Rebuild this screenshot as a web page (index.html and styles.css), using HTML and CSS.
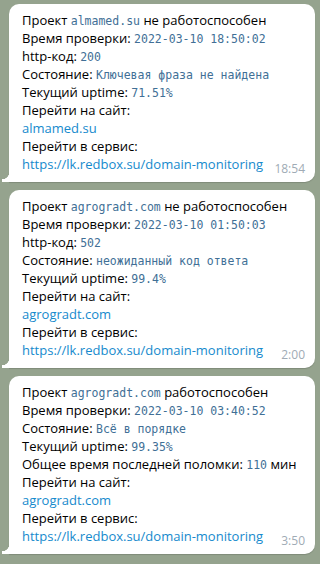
FILE: index.html
```html
<!DOCTYPE html>
<html lang="ru">
<head>
    <meta charset="UTF-8">
    <meta name="viewport" content="width=device-width, initial-scale=1.0">
    <title>Domain monitoring</title>
    <link rel="stylesheet" href="styles.css">
</head>
<body>
    <div class="chat">
        <div class="message">
            <div class="line">Проект <code>almamed.su</code> не работоспособен</div>
            <div class="line">Время проверки: <code>2022-03-10 18:50:02</code></div>
            <div class="line">http-код: <code>200</code></div>
            <div class="line">Состояние: <code>Ключевая фраза не найдена</code></div>
            <div class="line">Текущий uptime: <code>71.51%</code></div>
            <div class="line">Перейти на сайт:</div>
            <div class="line"><a href="#">almamed.su</a></div>
            <div class="line">Перейти в сервис:</div>
            <div class="line last">
                <a href="#">https://lk.redbox.su/domain-monitoring</a>
                <span class="time">18:54</span>
            </div>
        </div>

        <div class="message">
            <div class="line">Проект <code>agrogradt.com</code> не работоспособен</div>
            <div class="line">Время проверки: <code>2022-03-10 01:50:03</code></div>
            <div class="line">http-код: <code>502</code></div>
            <div class="line">Состояние: <code>неожиданный код ответа</code></div>
            <div class="line">Текущий uptime: <code>99.4%</code></div>
            <div class="line">Перейти на сайт:</div>
            <div class="line"><a href="#">agrogradt.com</a></div>
            <div class="line">Перейти в сервис:</div>
            <div class="line last">
                <a href="#">https://lk.redbox.su/domain-monitoring</a>
                <span class="time">2:00</span>
            </div>
        </div>

        <div class="message">
            <div class="line">Проект <code>agrogradt.com</code> работоспособен</div>
            <div class="line">Время проверки: <code>2022-03-10 03:40:52</code></div>
            <div class="line">Состояние: <code>Всё в порядке</code></div>
            <div class="line">Текущий uptime: <code>99.35%</code></div>
            <div class="line">Общее время последней поломки: <code>110</code> мин</div>
            <div class="line">Перейти на сайт:</div>
            <div class="line"><a href="#">agrogradt.com</a></div>
            <div class="line">Перейти в сервис:</div>
            <div class="line last">
                <a href="#">https://lk.redbox.su/domain-monitoring</a>
                <span class="time">3:50</span>
            </div>
        </div>
    </div>
</body>
</html>
```

FILE: styles.css
```css
body {
    margin: 0;
    height: 564px;
    overflow: hidden;
    background-color: #95a38e;
    font-family: 'Open Sans', 'Noto Sans', sans-serif;
    font-size: 13px;
    color: #000;
}

.chat {
    display: flex;
    flex-direction: column;
    gap: 8px;
    padding: 4px 5px 0 9px;
}

.message {
    position: relative;
    background: #fff;
    border-radius: 10px 10px 10px 0;
    padding: 7px 10px 9px 13px;
    box-shadow: 0 1px 1px rgba(0, 0, 0, 0.15);
}

.message::before {
    content: '';
    position: absolute;
    left: -7px;
    bottom: 0;
    width: 7px;
    height: 10px;
    background: radial-gradient(circle at 0 0, transparent 7px, #fff 7.5px);
}

.line {
    height: 18px;
    line-height: 18px;
    white-space: nowrap;
}

code {
    font-family: 'DejaVu Sans Mono', 'Liberation Mono', monospace;
    font-size: 11.5px;
    color: #416f96;
}

a {
    color: #168acd;
    text-decoration: none;
}

.last {
    display: flex;
    justify-content: space-between;
    align-items: flex-end;
}

.time {
    font-size: 12px;
    color: #a0abb5;
    margin-bottom: -5px;
}
```
